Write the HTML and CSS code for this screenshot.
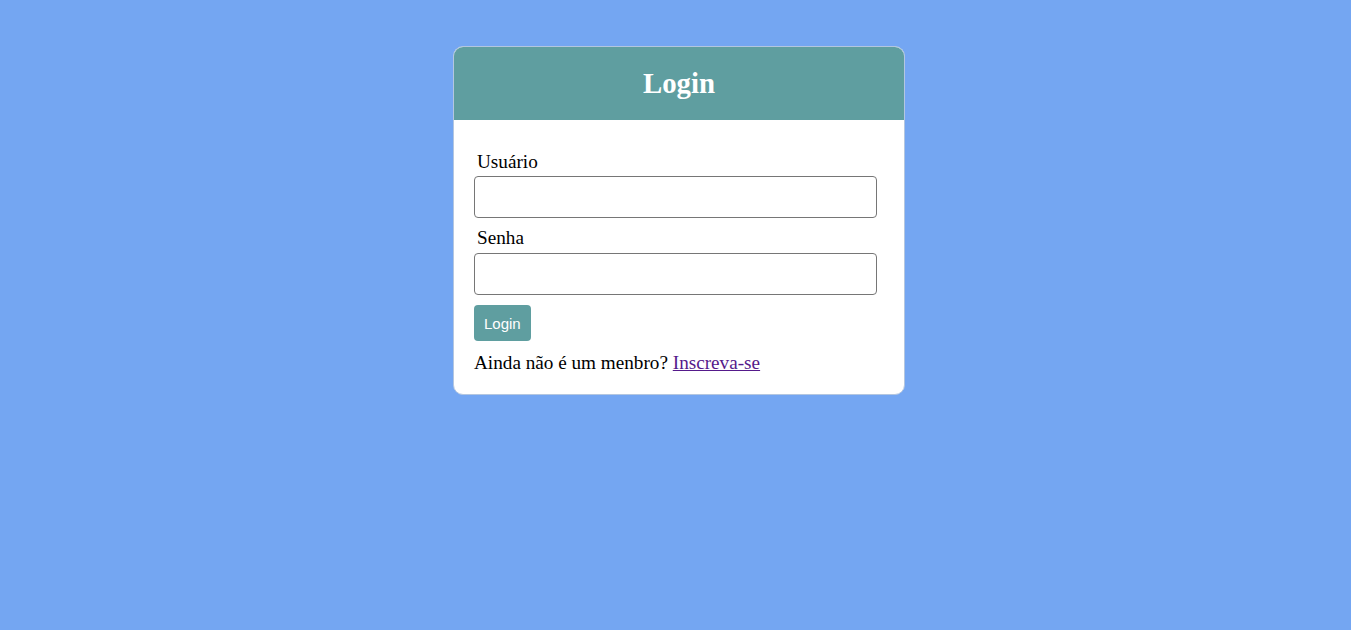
FILE: index.html
```html
<!DOCTYPE html>
<html lang="pt">
<head>
<meta charset="utf-8">
<title>Login</title>
<link rel="stylesheet" href="styles.css">
</head>
<body>
<main class="page">
  <section class="card">
    <header class="card-header">
      <h1 class="card-title">Login</h1>
    </header>
    <form class="card-body">
      <label class="field-label" for="user">Usuário</label>
      <input class="field-input" id="user" type="text">
      <label class="field-label field-label--second" for="pass">Senha</label>
      <input class="field-input" id="pass" type="password">
      <button class="btn" type="button">Login</button>
      <p class="signup">Ainda não é um menbro? <a class="signup-link" href="#">Inscreva-se</a></p>
    </form>
  </section>
</main>
</body>
</html>
```

FILE: styles.css
```css
html, body {
  margin: 0;
  padding: 0;
}
body {
  background: #74a6f2;
  font-family: "Liberation Serif", "Times New Roman", serif;
  min-height: 630px;
}
.page {
  display: flex;
  justify-content: center;
  padding-top: 46px;
  padding-left: 7px;
}
.card {
  width: 450px;
  background: #ffffff;
  border: 1px solid #b3c6e0;
  border-radius: 10px;
  overflow: hidden;
}
.card-header {
  height: 73px;
  background: #5f9ea0;
  display: flex;
  align-items: center;
  justify-content: center;
}
.card-title {
  margin: 0;
  color: #ffffff;
  font-size: 28.8px;
  font-weight: bold;
  line-height: 33px;
}
.card-body {
  display: flex;
  flex-direction: column;
  align-items: flex-start;
  padding: 31px 20px 20px 20px;
}
.field-label {
  display: block;
  font-size: 19.2px;
  line-height: 22px;
  margin-left: 3px;
  color: #000;
  margin-bottom: 3px;
}
.field-label--second {
  margin-top: 9px;
  margin-bottom: 4px;
}
.field-input {
  box-sizing: border-box;
  width: 403px;
  height: 42px;
  border: 1px solid #767676;
  border-radius: 4px;
  background: #fff;
  margin: 0;
  padding: 0 8px;
  font-size: 16px;
}
.btn {
  margin-top: 10px;
  height: 36px;
  padding: 0 10px;
  border: none;
  border-radius: 4px;
  background: #5f9ea0;
  color: #ffffff;
  font-family: "Liberation Sans", Arial, sans-serif;
  font-size: 15px;
  cursor: pointer;
}
.signup {
  margin: 11px 0 0 0;
  font-size: 19.2px;
  line-height: 22px;
  color: #000;
}
.signup-link {
  color: #551a8b;
}
```
